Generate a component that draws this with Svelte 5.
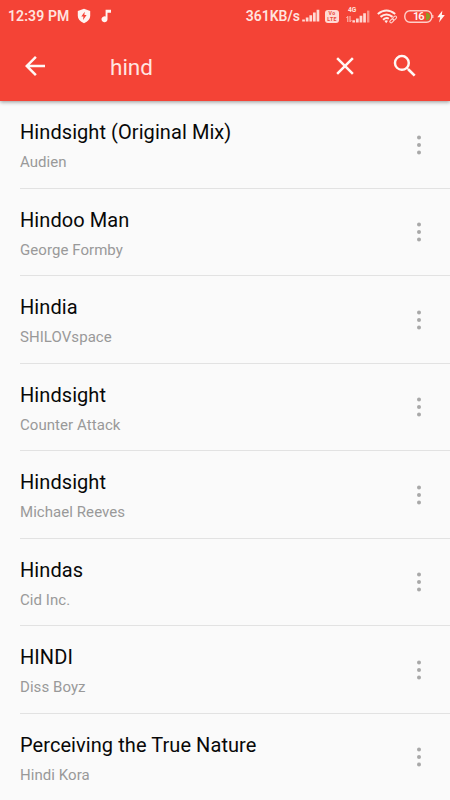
<script>
  const songs = [
    { title: 'Hindsight (Original Mix)', artist: 'Audien' },
    { title: 'Hindoo Man', artist: 'George Formby' },
    { title: 'Hindia', artist: 'SHILOVspace' },
    { title: 'Hindsight', artist: 'Counter Attack' },
    { title: 'Hindsight', artist: 'Michael Reeves' },
    { title: 'Hindas', artist: 'Cid Inc.' },
    { title: 'HINDI', artist: 'Diss Boyz' },
    { title: 'Perceiving the True Nature', artist: 'Hindi Kora' }
  ];
</script>

<div class="screen">
  <header>
    <div class="status">
      <span class="clock">12:39 PM</span>
      <svg class="shield" width="14" height="16" viewBox="0 0 14 16">
        <path d="M7 .8 13.2 3V8q0 4.5-6.2 7.2Q.8 12.5.8 8V3Z" fill="#fff3f0" />
        <path d="M7.7 3.8 4.3 8.5h2.1L6.1 12l3.5-4.9H7.4Z" fill="#f44336" />
      </svg>
      <svg class="note" width="11" height="14" viewBox="0 0 11 14">
        <path d="M4.6.8H10v3H6.5v6.4a3 3 0 1 1-1.9-2.7Z" fill="#fff3f0" />
      </svg>
      <span class="grow"></span>
      <span class="speed">361KB/s</span>
      <svg class="bars" width="18" height="13" viewBox="0 0 18 13">
        <path d="M.2 12.5v-2h2.7v2ZM3.8 12.5V8.5h2.7v4ZM7.4 12.5V6.2h2.7v6.3ZM11 12.5V3.5h2.7v9ZM14.6 12.5V.8h2.7v11.7Z" fill="#ffd9d4" />
      </svg>
      <span class="volte"><b>Vo</b><b>LTE</b></span>
      <svg class="mobile" width="24" height="18" viewBox="0 0 24 18">
        <text x="2" y="5.8" font-size="6.6" font-weight="700" fill="#ffe3df">4G</text>
        <path d="M1.8 16V10.5M.5 12l1.3-1.7M4 10v5.8M4 15.8l1.3-1.6" fill="none" stroke="#ffc5bd" stroke-width="1" />
        <path d="M6.4 16.5v-2.3h2.7v2.3ZM10 16.5v-4h2.7v4ZM13.6 16.5V9.8h2.7v6.7ZM17.2 16.5V7.2h2.7v9.3Z" fill="#ffd9d4" />
        <path d="M21 16.5V4.6h2.4v11.9Z" fill="#fa938a" />
      </svg>
      <svg class="wifi" width="21" height="15" viewBox="0 0 21 15">
        <g fill="none" stroke="#ffe9e5" stroke-width="2">
          <path d="M.8 5Q9.5-2 18.2 5" />
          <path d="M3.5 7.9Q9.5 3.1 15.5 7.9" />
          <path d="M6 10.7Q9.5 8 11.8 9.7" />
        </g>
        <path d="M7.3 11.8Q9.2 10.6 11 11.8L9.2 14.2Z" fill="#ffe9e5" />
        <g fill="none" stroke="#ffd0ca" stroke-width="1.1">
          <rect x="-2.2" y="-1.3" width="4.4" height="2.6" rx="1.3" transform="translate(14.8 11.8) rotate(-45)" />
          <rect x="-2.2" y="-1.3" width="4.4" height="2.6" rx="1.3" transform="translate(17.6 9) rotate(-45)" />
        </g>
      </svg>
      <svg class="battery" width="30" height="13" viewBox="0 0 30 13">
        <rect x=".8" y=".8" width="27" height="11.4" rx="5.2" fill="none" stroke="#ffd0ca" stroke-width="1.4" />
        <path d="M28.8 5v3" stroke="#ffd0ca" stroke-width="1.2" />
        <path d="M22 2.5q4 .5 4 4T22 10.5Z" fill="#8d9a22" />
        <text x="9" y="10.4" font-size="11" font-weight="600" fill="#fff3f0" textLength="11.5">16</text>
      </svg>
      <svg class="charge" width="8" height="13" viewBox="0 0 8 13">
        <path d="M5.4.5.3 7.2h2.9L2 12.4 7.8 5H4.8Z" fill="#fff3f0" />
      </svg>
    </div>

    <div class="toolbar">
      <svg class="back" width="30" height="30" viewBox="0 0 24 24">
        <path d="M20 11H7.83l5.59-5.59L12 4l-8 8 8 8 1.41-1.41L7.83 13H20v-2z" fill="#fff8f5" />
      </svg>
      <span class="query">hind</span>
      <svg class="clear" width="30" height="30" viewBox="0 0 24 24">
        <path d="M19 6.41 17.59 5 12 10.59 6.41 5 5 6.41 10.59 12 5 17.59 6.41 19 12 13.41 17.59 19 19 17.59 13.41 12z" fill="#fff8f5" />
      </svg>
      <svg class="search" width="30" height="30" viewBox="0 0 24 24">
        <path d="M15.5 14h-.79l-.28-.27A6.471 6.471 0 0 0 16 9.5 6.5 6.5 0 1 0 9.5 16c1.61 0 3.09-.59 4.23-1.57l.27.28v.79l5 4.99L20.49 19l-4.99-5zm-6 0C7.01 14 5 11.99 5 9.5S7.01 5 9.5 5 14 7.01 14 9.5 11.99 14 9.5 14z" fill="#fff8f5" />
      </svg>
    </div>
  </header>

  <main>
    {#each songs as song}
      <div class="row">
        <div class="labels">
          <div class="title">{song.title}</div>
          <div class="artist">{song.artist}</div>
        </div>
        <svg class="more" width="6" height="20" viewBox="0 0 6 20" fill="#a8a8a8">
          <circle cx="3" cy="2.6" r="2" />
          <circle cx="3" cy="10.1" r="2" />
          <circle cx="3" cy="17.6" r="2" />
        </svg>
      </div>
    {/each}
  </main>
</div>

<style>
  .screen {
    width: 450px;
    height: 800px;
    overflow: hidden;
    background: #fafafa;
    font-family: Roboto, sans-serif;
    display: flex;
    flex-direction: column;
  }
  header {
    flex: none;
    height: 101px;
    background: #f44336;
    box-shadow: 0 1px 4px rgba(0, 0, 0, 0.42);
    z-index: 1;
  }
  svg {
    flex: none;
    display: block;
  }
  .status {
    height: 32px;
    display: flex;
    align-items: center;
    padding-left: 8px;
    color: #ffe3df;
  }
  .clock,
  .speed {
    font-size: 14px;
    font-weight: 600;
    line-height: 32px;
    white-space: nowrap;
  }
  .clock { letter-spacing: 0.1px; }
  .shield { margin-left: 8px; }
  .note { margin-left: 10px; }
  .grow { flex: 1; }
  .bars { margin: 0 0 1px 2px; }
  .volte {
    width: 14px;
    height: 13px;
    margin-left: 5px;
    border-radius: 3px;
    background: #ffd9d4;
    color: #e8483d;
    display: flex;
    flex-direction: column;
    align-items: center;
    justify-content: center;
    font-size: 5.2px;
    line-height: 6px;
    letter-spacing: 0.3px;
  }
  .mobile { margin: 0 0 2px 7px; }
  .wifi { margin-left: 7px; }
  .battery { margin-left: 6px; }
  .charge { margin: 0 5px 0 3px; }
  .toolbar {
    height: 69px;
    display: flex;
    align-items: center;
    padding: 0 30px 0 20px;
  }
  .toolbar svg { margin-bottom: 1px; }
  .query {
    flex: 1;
    margin-left: 60px;
    font-size: 22.5px;
    line-height: 30px;
    color: #ffe5e1;
  }
  .search { margin-left: 30px; }
  .row {
    box-sizing: border-box;
    height: 87.5px;
    margin-left: 20px;
    padding: 17.4px 28.3px 0 0;
    display: flex;
    justify-content: space-between;
    border-bottom: 1px solid #e2e2e2;
  }
  .title {
    font-size: 20px;
    letter-spacing: 0.07px;
    line-height: 28px;
    color: #080808;
    white-space: nowrap;
  }
  .artist {
    margin-top: 6px;
    font-size: 15px;
    letter-spacing: 0.06px;
    line-height: 20px;
    color: #999;
  }
  .more { margin-top: 16.2px; }
</style>
